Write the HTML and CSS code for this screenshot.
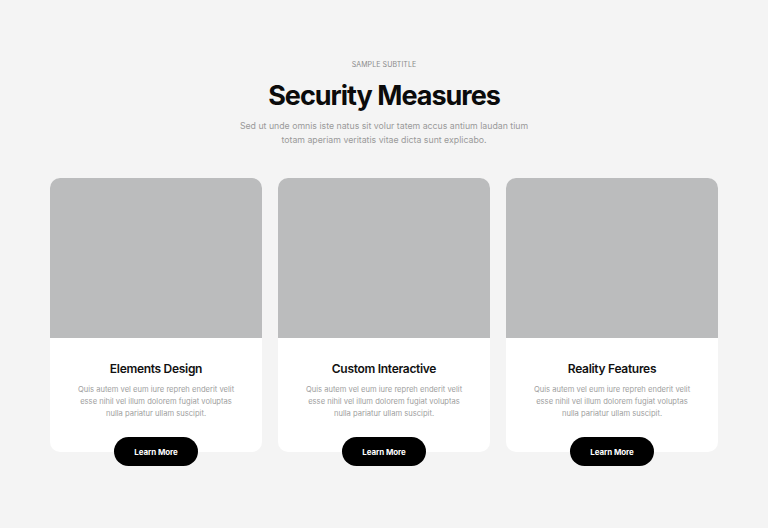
FILE: index.html
```html
<!DOCTYPE html>
<html lang="en">
<head>
<meta charset="utf-8">
<title>Security Measures</title>
<link rel="stylesheet" href="styles.css">
</head>
<body>
<section class="section">
  <header class="head">
    <p class="subtitle">SAMPLE SUBTITLE</p>
    <h1 class="title">Security Measures</h1>
    <p class="lead">Sed ut unde omnis iste natus sit volur tatem accus antium laudan tium<br>totam aperiam veritatis vitae dicta sunt explicabo.</p>
  </header>
  <div class="cards">
    <article class="card">
      <div class="card-panel">
        <div class="card-img"></div>
        <h2 class="card-title">Elements Design</h2>
        <p class="card-text">Quis autem vel eum iure repreh enderit velit<br>esse nihil vel illum dolorem fugiat voluptas<br>nulla pariatur ullam suscipit.</p>
      </div>
      <a class="btn" href="#">Learn More</a>
    </article>
    <article class="card">
      <div class="card-panel">
        <div class="card-img"></div>
        <h2 class="card-title">Custom Interactive</h2>
        <p class="card-text">Quis autem vel eum iure repreh enderit velit<br>esse nihil vel illum dolorem fugiat voluptas<br>nulla pariatur ullam suscipit.</p>
      </div>
      <a class="btn" href="#">Learn More</a>
    </article>
    <article class="card">
      <div class="card-panel">
        <div class="card-img"></div>
        <h2 class="card-title">Reality Features</h2>
        <p class="card-text">Quis autem vel eum iure repreh enderit velit<br>esse nihil vel illum dolorem fugiat voluptas<br>nulla pariatur ullam suscipit.</p>
      </div>
      <a class="btn" href="#">Learn More</a>
    </article>
  </div>
</section>
</body>
</html>
```
FILE: styles.css
```css
html, body {
  margin: 0;
  padding: 0;
  background: #f4f4f4;
  font-family: Inter, "Noto Sans", "Liberation Sans", sans-serif;
}
.section {
  padding: 60px 50px 40px;
}
.head {
  text-align: center;
}
.subtitle {
  margin: 0;
  font-size: 7px;
  line-height: 10px;
  color: #8a8a8a;
  letter-spacing: 0.1px;
}
.title {
  margin: 10px 0 0;
  font-size: 27px;
  line-height: 32px;
  font-weight: 700;
  letter-spacing: -1px;
  color: #0b0b0b;
}
.lead {
  margin: 7px 0 0;
  font-size: 8.75px;
  line-height: 14px;
  color: #9a9a9a;
}
.cards {
  margin-top: 31px;
  display: grid;
  grid-template-columns: repeat(3, 1fr);
  gap: 16px;
}
.card {
  display: flex;
  flex-direction: column;
  align-items: center;
}
.card-panel {
  align-self: stretch;
  background: #fff;
  border-radius: 10px;
  padding-bottom: 32px;
  display: flex;
  flex-direction: column;
  align-items: center;
  text-align: center;
}
.card-img {
  align-self: stretch;
  height: 160px;
  background: #bbbcbd;
  border-radius: 10px 10px 0 0;
}
.card-title {
  margin: 23px 0 0;
  font-size: 12px;
  line-height: 16px;
  font-weight: 600;
  letter-spacing: -0.3px;
  color: #111;
}
.card-text {
  margin: 7px 0 0;
  font-size: 7.6px;
  line-height: 12px;
  color: #a0a0a0;
}
.btn {
  margin-top: -15px;
  width: 84px;
  height: 29px;
  border-radius: 15px;
  background: #000;
  color: #fff;
  font-size: 8px;
  font-weight: 700;
  text-decoration: none;
  display: flex;
  align-items: center;
  justify-content: center;
  letter-spacing: -0.1px;
}
```
